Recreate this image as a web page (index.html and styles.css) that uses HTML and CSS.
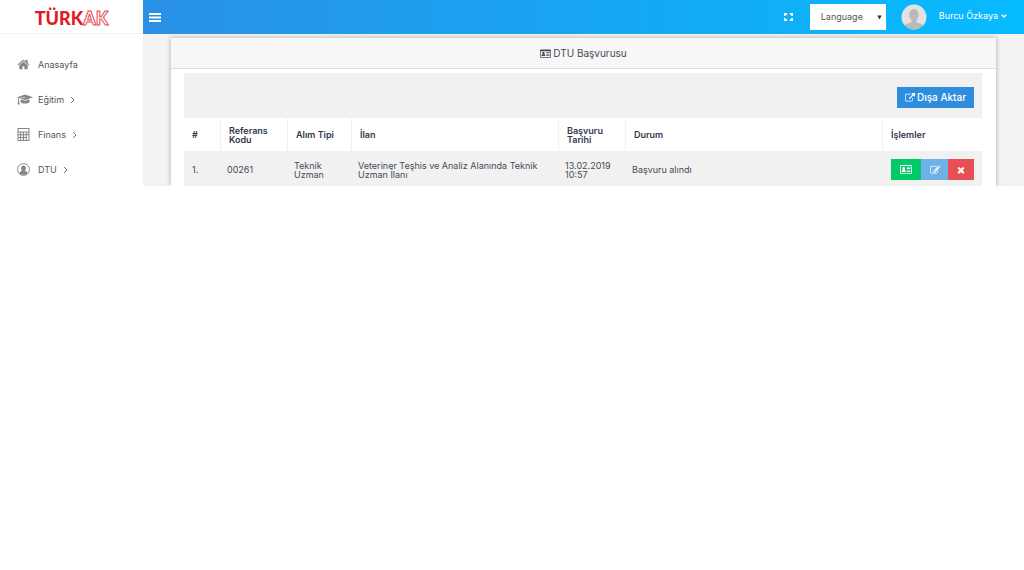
FILE: index.html
```html
<!DOCTYPE html>
<html lang="tr">
<head>
<meta charset="utf-8">
<meta name="viewport" content="width=device-width, initial-scale=1">
<title>TÜRKAK - DTU Başvurusu</title>
<link rel="stylesheet" href="styles.css">
</head>
<body>
<div class="app">
  <aside class="sidebar">
    <a class="logo" href="#">TÜRK<span class="logo-outline">AK</span></a>
    <nav class="menu">
      <a class="menu-item" href="#">
        <svg class="menu-icon" viewBox="0 0 1792 1792"><path d="M1472 992v480q0 26-19 45t-45 19h-384v-384h-256v384h-384q-26 0-45-19t-19-45v-480q0-1 .5-3t.5-3l575-474 575 474q1 2 1 6zm223-69l-62 74q-8 9-21 11h-3q-13 0-21-7l-692-577-692 577q-12 8-24 7-13-2-21-11l-62-74q-8-10-7-23.500t11-21.500l719-599q32-26 76-26t76 26l244 204v-195q0-14 9-23t23-9h192q14 0 23 9t9 23v408l219 182q10 8 11 21.500t-7 23.500z"/></svg>
        <span>Anasayfa</span>
      </a>
      <a class="menu-item" href="#">
        <svg class="menu-icon menu-icon-wide" viewBox="0 0 16 12"><path d="M8 .5 16 3.300 8 6 3 4.300 8.300 3.500 8.100 3 2.200 4 2 6.300 2.700 10.500H.6L1.200 6.300 1.400 3.800 0 3.300zM3.700 5.300 8 6.800l4.400-1.500.2 2.700C11 10 5 10 3.500 8z"/></svg>
        <span>Eğitim</span>
        <svg class="chevron" viewBox="0 0 5 8"><path d="M1 1l3 3-3 3"/></svg>
      </a>
      <a class="menu-item" href="#">
        <svg class="menu-icon" viewBox="0 0 13 13"><path fill-rule="evenodd" d="M.5 0h12v13H.5zM1.500 1v2.500h10V1zM1.500 4.500v1.700h1.700V4.500zm2.700 0v1.700h1.800V4.500zm2.800 0v1.700h1.800V4.500zm2.700 0v1.700h1.800V4.500zM1.500 7.200v1.700h1.700V7.200zm2.700 0v1.700h1.800V7.200zm2.800 0v1.700h1.800V7.200zm2.700 0v4.800h1.800V7.200zM1.500 9.900v2.100h1.700V9.900zm2.700 0v2.100h1.800V9.900zm2.800 0v2.100h1.800V9.900z"/></svg>
        <span>Finans</span>
        <svg class="chevron" viewBox="0 0 5 8"><path d="M1 1l3 3-3 3"/></svg>
      </a>
      <a class="menu-item" href="#">
        <svg class="menu-icon" viewBox="0 0 14 14"><circle cx="7" cy="7" r="6.400" fill="none" stroke="currentColor"/><ellipse cx="7" cy="5.600" rx="2.500" ry="3"/><path d="M2.500 11C3 9 4.500 8.600 5.600 8h2.800c1.100.6 2.600 1 3.100 3C9.500 13.300 4.500 13.300 2.500 11z"/></svg>
        <span>DTU</span>
        <svg class="chevron" viewBox="0 0 5 8"><path d="M1 1l3 3-3 3"/></svg>
      </a>
    </nav>
  </aside>
  <div class="main">
    <header class="topbar">
      <button class="icon-button" type="button" aria-label="Menü">
        <svg class="burger" viewBox="0 0 12 9"><path d="M0 1h12M0 4.500h12M0 8h12"/></svg>
      </button>
      <div class="topbar-right">
        <button class="icon-button" type="button" aria-label="Tam ekran">
          <svg class="expand" viewBox="0 0 9 8"><path d="M3.200.7H.8v2.200M5.800.7h2.400v2.200M3.200 7.300H.8V5.100M5.800 7.300h2.400V5.100"/></svg>
        </button>
        <div class="language">
          <select class="language-select" aria-label="Language"><option>Language</option></select>
          <svg class="language-arrow" viewBox="0 0 5 5"><path d="M.3.500h4.400L2.500 4.500z"/></svg>
        </div>
        <button class="user" type="button">
          <svg class="avatar" viewBox="0 0 26 26"><clipPath id="face"><circle cx="13" cy="13" r="12.500"/></clipPath><circle cx="13" cy="13" r="12.500" fill="#e2e2e2"/><g clip-path="url(#face)" fill="#b9b9b9"><ellipse cx="13" cy="10.800" rx="4.800" ry="5.800"/><path d="M10.500 15h5v3.500c3 .8 6 1.500 7.500 4V27H3v-4.500c1.500-2.500 4.500-3.200 7.500-4z"/></g></svg>
          <span class="user-label">
            <span>Burcu Özkaya</span>
            <svg class="user-arrow" viewBox="0 0 6 4"><path d="M.7.700 3 3 5.300.7"/></svg>
          </span>
        </button>
      </div>
    </header>
    <main class="content">
      <section class="card">
        <h1 class="card-title">
          <svg class="card-icon" viewBox="0 0 12 9"><path fill-rule="evenodd" d="M1 0h10q1 0 1 1v7q0 1-1 1H1Q0 9 0 8V1Q0 0 1 0zM.8 2v6.200h10.400V2zM3.700 2.700a1.300 1.400 0 1 1 0 2.800 1.300 1.400 0 0 1 0-2.800zM1.600 7.200Q1.600 5 2.800 5q.9.700 1.800 0 1.200 0 1.200 2.200zM6.800 3.200h3.600v.8H6.800zM6.800 4.700h3.600v.8H6.800zM6.800 6.200h3.600V7H6.800z"/></svg>
          <span>DTU Başvurusu</span>
        </h1>
        <div class="card-body">
          <div class="toolbar">
            <button class="export" type="button">
              <svg class="export-icon" viewBox="0 0 1792 1792"><path d="M1408 928v320q0 119-84.500 203.500t-203.500 84.500h-832q-119 0-203.500-84.500t-84.500-203.500v-832q0-119 84.500-203.500t203.500-84.500h704q14 0 23 9t9 23v64q0 14-9 23t-23 9h-704q-66 0-113 47t-47 113v832q0 66 47 113t113 47h832q66 0 113-47t47-113v-320q0-14 9-23t23-9h64q14 0 23 9t9 23zm384-864v512q0 26-19 45t-45 19-45-19l-176-176-652 652q-10 10-23 10t-23-10l-114-114q-10-10-10-23t10-23l652-652-176-176q-19-19-19-45t19-45 45-19h512q26 0 45 19t19 45z"/></svg>
              <span>Dışa Aktar</span>
            </button>
          </div>
          <table class="grid">
            <colgroup><col class="col-no"><col class="col-ref"><col class="col-type"><col class="col-ad"><col class="col-date"><col><col class="col-actions"></colgroup>
            <thead>
              <tr><th>#</th><th>Referans<br>Kodu</th><th>Alım Tipi</th><th>İlan</th><th>Başvuru<br>Tarihi</th><th>Durum</th><th>İşlemler</th></tr>
            </thead>
            <tbody>
              <tr>
                <td>1.</td><td>00261</td><td>Teknik<br>Uzman</td><td>Veteriner Teşhis ve Analiz Alanında Teknik<br>Uzman İlanı</td><td>13.02.2019<br>10:57</td><td>Başvuru alındı</td>
                <td>
                  <div class="actions">
                    <button class="action action-view" type="button" aria-label="Görüntüle"><svg class="action-card" viewBox="0 0 12 9"><path fill-rule="evenodd" d="M1 0h10q1 0 1 1v7q0 1-1 1H1Q0 9 0 8V1Q0 0 1 0zM.8 1v7.200h10.400V1zM3.700 2a1.300 1.400 0 1 1 0 2.800 1.300 1.400 0 0 1 0-2.800zM1.600 7Q1.600 4.500 2.800 4.500q.9.700 1.800 0 1.200 0 1.200 2.500zM6.800 2.500h3.600v1.400H6.800zM6.800 4.900h3.600v.7H6.800zM6.800 6.300h3.600V7H6.800z"/></svg></button>
                    <button class="action action-edit" type="button" aria-label="Düzenle"><svg class="action-icon" viewBox="0 0 1792 1792"><path d="M888 1184l116-116-152-152-116 116v56h96v96h56zm440-720q-16-16-33 1l-350 350q-17 17-1 33t33-1l350-350q17-17 1-33zm80 594v190q0 119-84.500 203.500t-203.500 84.500h-832q-119 0-203.500-84.500t-84.500-203.500v-832q0-119 84.500-203.500t203.500-84.500h832q63 0 117 25 15 7 18 23 3 17-9 29l-49 49q-14 14-32 8-23-6-45-6h-832q-66 0-113 47t-47 113v832q0 66 47 113t113 47h832q66 0 113-47t47-113v-126q0-13 9-22l64-64q15-15 35-7t20 29zm-96-738l288 288-672 672h-288v-288zm444 132l-92 92-288-288 92-92q28-28 68-28t68 28l152 152q28 28 28 68t-28 68z"/></svg></button>
                    <button class="action action-delete" type="button" aria-label="Sil"><svg class="action-icon" viewBox="0 0 1792 1792"><path d="M1490 1322q0 40-28 68l-136 136q-28 28-68 28t-68-28l-294-294-294 294q-28 28-68 28t-68-28l-136-136q-28-28-28-68t28-68l294-294-294-294q-28-28-28-68t28-68l136-136q28-28 68-28t68 28l294 294 294-294q28-28 68-28t68 28l136 136q28 28 28 68t-28 68l-294 294 294 294q28 28 28 68z"/></svg></button>
                  </div>
                </td>
              </tr>
            </tbody>
          </table>
        </div>
      </section>
    </main>
  </div>
</div>
</body>
</html>
```
FILE: styles.css
```css
* { box-sizing: border-box; }

body {
  margin: 0;
  background: #fff;
  color: #454b57;
  font: 9px/9px Inter, "Open Sans", sans-serif;
}

button, select { font: inherit; border: 0; border-radius: 0; padding: 0; cursor: pointer; }
a { color: inherit; text-decoration: none; }
svg { display: block; flex: none; fill: currentColor; }

.app { display: flex; overflow: hidden; }

/* Sidebar */
.sidebar { flex: none; width: 143px; background: #fff; }
.logo {
  display: flex;
  align-items: center;
  justify-content: center;
  height: 34px;
  padding-top: 2px;
  border-bottom: 1px solid #f2f2f2;
  color: #e01b22;
  font: 900 18px/20px Lato, sans-serif;
}
.logo-outline { color: #fff; -webkit-text-stroke: 1px #e5484d; }
.menu { display: flex; flex-direction: column; gap: 2px; padding-top: 14px; }
.menu-item {
  display: flex;
  align-items: center;
  height: 33px;
  padding-left: 17px;
  color: #555;
}
.menu-icon { width: 13px; height: 13px; margin-right: 8px; color: #858585; }
.menu-icon-wide { width: 16px; height: 12px; margin-right: 5px; }
.chevron { width: 5px; height: 8px; margin-left: 6px; fill: none; stroke: #777; }

/* Top bar */
.main { flex: 1; min-width: 0; background: #f3f3f3; }
.topbar {
  display: flex;
  align-items: center;
  justify-content: space-between;
  height: 34px;
  padding: 0 17px 0 6px;
  background: linear-gradient(90deg, #2a90e6, #06bbff);
  color: #fff;
}
.icon-button { background: none; color: #fff; }
.burger { width: 12px; height: 9px; stroke: #fff; stroke-width: 2; }
.expand { width: 9px; height: 8px; fill: none; stroke: #fff; stroke-width: 2; }
.topbar-right { display: flex; align-items: center; }
.language { position: relative; margin: 0 15px 0 17px; }
.language-select {
  display: block;
  width: 76px;
  height: 26px;
  padding-left: 11px;
  appearance: none;
  background: #fff;
  color: #555;
  line-height: 24px;
}
.language-arrow { position: absolute; right: 4px; top: 11px; width: 5px; height: 5px; color: #333; pointer-events: none; }
.user { display: flex; align-items: center; gap: 12px; background: none; color: #fff; }
.user-label { display: flex; align-items: center; gap: 3px; padding-bottom: 3px; }
.avatar { width: 26px; height: 26px; }
.user-arrow { width: 6px; height: 4px; fill: none; stroke: #fff; stroke-width: 1.4; }

/* Card */
.content { padding: 4px 28px 0; }
.card { background: #fff; box-shadow: 0 0 5px #aaa; }
.card-title {
  display: flex;
  align-items: center;
  justify-content: center;
  gap: 2px;
  height: 31px;
  margin: 0;
  border-bottom: 1px solid #ddd;
  background: #f7f7f7;
  font-size: 10px;
  font-weight: 400;
}
.card-icon { width: 11px; height: 9px; }
.card-body { padding: 4px 14px 0 13px; }
.toolbar {
  display: flex;
  align-items: center;
  justify-content: flex-end;
  height: 45px;
  padding: 4px 8px 0;
  background: #f1f1f1;
}
.export {
  display: flex;
  align-items: center;
  justify-content: center;
  gap: 2px;
  width: 77px;
  height: 21px;
  background: #2f8de0;
  color: #fff;
  font-size: 10px;
  font-weight: 500;
}
.export-icon { width: 10px; height: 10px; }

/* Applications table */
.grid { width: 100%; border-spacing: 0; table-layout: fixed; }
.grid th, .grid td { text-align: left; vertical-align: middle; border-right: 1px solid #f1f1f1; }
.grid th:last-child, .grid td:last-child { border-right: 0; }
.grid th { height: 33px; padding: 0 8px; color: #333848; font-weight: 600; }
.grid td { height: 35px; padding: 2px 6px 0; background: #f1f1f1; white-space: nowrap; }
.grid td:first-child, .grid td:last-child { padding: 2px 8px 0; }
.col-no { width: 37px; }
.col-ref { width: 67px; }
.col-type { width: 64px; }
.col-ad { width: 207px; }
.col-date { width: 67px; }
.col-actions { width: 99px; }

.actions { display: flex; }
.action { display: flex; align-items: center; justify-content: center; width: 26px; height: 21px; color: #fff; }
.action-view { width: 30px; background: #00c967; }
.action-edit { width: 27px; background: #70b0e8; }
.action-delete { background: #e84f55; }
.action-card { width: 12px; height: 9px; }
.action-icon { width: 10px; height: 10px; }
```
